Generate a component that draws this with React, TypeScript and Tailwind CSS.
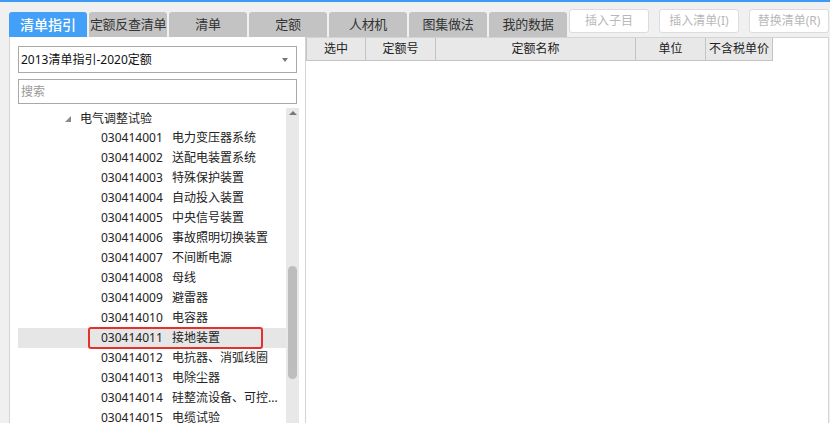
import { useState } from 'react';

const tabs = ['清单指引', '定额反查清单', '清单', '定额', '人材机', '图集做法', '我的数据'];
const actions = ['插入子目', '插入清单(I)', '替换清单(R)'];

const items: [string, string][] = [
  ['030414001', '电力变压器系统'],
  ['030414002', '送配电装置系统'],
  ['030414003', '特殊保护装置'],
  ['030414004', '自动投入装置'],
  ['030414005', '中央信号装置'],
  ['030414006', '事故照明切换装置'],
  ['030414007', '不间断电源'],
  ['030414008', '母线'],
  ['030414009', '避雷器'],
  ['030414010', '电容器'],
  ['030414011', '接地装置'],
  ['030414012', '电抗器、消弧线圈'],
  ['030414013', '电除尘器'],
  ['030414014', '硅整流设备、可控...'],
  ['030414015', '电缆试验']
];

const columns = [
  { label: '选中', w: 'w-[60px]' },
  { label: '定额号', w: 'w-[70px]' },
  { label: '定额名称', w: 'w-[200px]' },
  { label: '单位', w: 'w-[70px]' },
  { label: '不含税单价', w: 'w-[67px]' }
];

const font = "font-['Noto_Sans','Noto_Sans_CJK_SC',sans-serif]";

export default function App() {
  const [active, setActive] = useState(0);
  const selected = '030414011';

  return (
    <div
      className={`flex h-[423px] w-[830px] flex-col overflow-hidden border-t-2 border-[#3d9bf5] bg-[#f0f0f0] ${font}`}
    >
      {/* top bar */}
      <div className="flex h-[35px] shrink-0 pl-[9px]">
        <div className="flex items-end gap-[2px]">
          {tabs.map((tab, i) => (
            <button
              key={tab}
              type="button"
              onClick={() => setActive(i)}
              className={`flex h-[25px] w-[78px] items-center justify-center rounded-t-[3px] leading-none ${
                i === active ? 'bg-[#42a0f8] text-[14px] font-medium text-white' : 'bg-[#c3c3c3] text-[13px] tracking-[-0.3px] text-[#333]'
              }`}
            >
              {tab}
            </button>
          ))}
        </div>
        <div className="ml-[2px] flex gap-[10px] pt-[7px]">
          {actions.map((a) => (
            <button
              key={a}
              type="button"
              className="flex h-[24px] w-[80px] items-center justify-center rounded-[3px] border border-[#dcdcdc] bg-white text-[12px] leading-none text-[#b8b8b8]"
            >
              {a}
            </button>
          ))}
        </div>
      </div>

      {/* body */}
      <div className="flex min-h-0 flex-1">
        {/* left panel */}
        <div className="ml-[9px] flex w-[297px] shrink-0 flex-col border-l border-r border-[#d4d4d4] bg-white">
          <div className="px-[8px] pt-[9px]">
            <div className="flex h-[27px] items-center justify-between border border-[#a9a9a9] pl-[2px] pr-[8px] text-[12px] text-[#111]">
              <span>2013清单指引-2020定额</span>
              <span className="h-0 w-0 border-x-[3px] border-t-[4px] border-x-transparent border-t-[#777]" />
            </div>
            <div className="mt-[6px] flex h-[25px] items-center border border-[#a9a9a9] pl-[2px] text-[12px] text-[#999]">
              搜索
            </div>
          </div>

          <div className="relative mt-[4px] flex min-h-0 flex-1 pl-[8px] pr-[6px]">
            <div className="flex-1 overflow-hidden text-[12px] text-[#222]">
              <div className="flex h-[20px] items-center pl-[47px] pt-[1px]">
                <span className="mr-[9px] h-0 w-0 border-b-[6px] border-l-[6px] border-b-[#8a8a8a] border-l-transparent" />
                <span>电气调整试验</span>
              </div>
              {items.map(([code, name]) => (
                <div
                  key={code}
                  className={`relative flex h-[20px] items-center pl-[83px] ${code === selected ? 'bg-[#e6e6e6]' : ''}`}
                >
                  <span className="w-[71px] shrink-0">{code}</span>
                  <span className="truncate">{name}</span>
                  {code === selected && (
                    <span className="pointer-events-none absolute left-[70px] top-[-1px] h-[22px] w-[175px] rounded-[3px] border-2 border-[#e8302a]" />
                  )}
                </div>
              ))}
            </div>
            {/* scrollbar */}
            <div className="relative w-[13px] shrink-0 bg-[#e8e8e8]">
              <span className="absolute left-[3px] top-[3px] h-0 w-0 border-x-[4px] border-b-[4px] border-x-transparent border-b-[#777]" />
              <div className="absolute left-[2px] top-[158px] h-[113px] w-[9px] rounded-[5px] bg-[#bdbdbd]" />
            </div>
          </div>
        </div>

        {/* right panel */}
        <div className="mr-[1px] flex-1 border-t border-r border-[#d4d4d4] bg-white">
          <div className="flex">
            {columns.map((c, i) => (
              <div
                key={c.label}
                className={`flex h-[23px] items-center justify-center border-b border-r border-[#c4c4c4] bg-[#e8e8e8] text-[12px] text-[#222] ${c.w} ${i === 0 ? 'border-l' : ''}`}
              >
                {c.label}
              </div>
            ))}
          </div>
        </div>
      </div>
    </div>
  );
}
